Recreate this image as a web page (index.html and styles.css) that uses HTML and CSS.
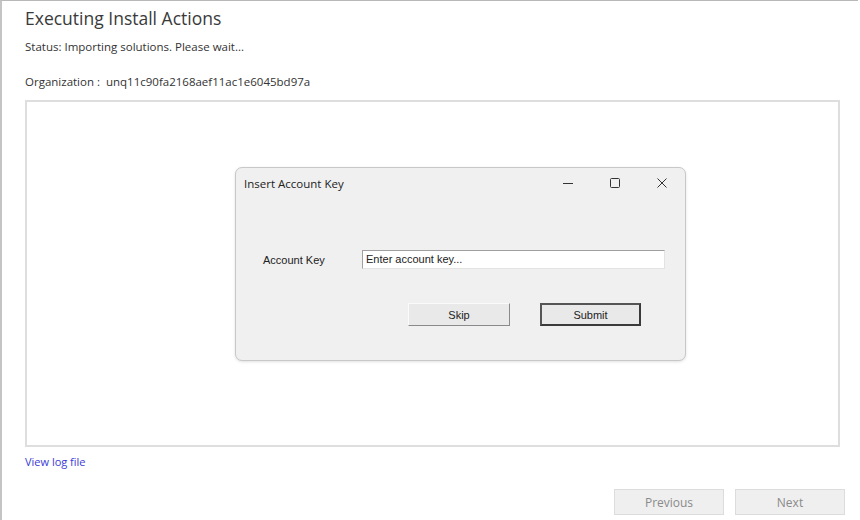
FILE: index.html
```html
<!DOCTYPE html>
<html>
	<head>
		<meta charset="utf-8">
		<title>Executing Install Actions</title>
		<link rel="stylesheet" href="styles.css">
	</head>
	<body>
		<div class="wizard">
			<h1 class="title">Executing Install Actions</h1>
			<p class="status">Status: Importing solutions. Please wait...</p>
			<p class="org">Organization :&nbsp; unq11c90fa2168aef11ac1e6045bd97a</p>

			<div class="panel">
				<div class="dialog">
					<div class="dlg-head">
						<span class="dlg-title">Insert Account Key</span>
						<span class="dlg-ctrl">
							<svg width="12" height="12" viewBox="0 0 12 12"><path d="M1 6.5h10" stroke="#333" stroke-width="1"/></svg>
						</span>
						<span class="dlg-ctrl">
							<svg width="12" height="12" viewBox="0 0 12 12"><rect x="1.5" y="1.5" width="9" height="9" rx="1" fill="none" stroke="#333" stroke-width="1"/></svg>
						</span>
						<span class="dlg-ctrl">
							<svg width="12" height="12" viewBox="0 0 12 12"><path d="M1.5 1.5l9 9M10.5 1.5l-9 9" stroke="#333" stroke-width="1"/></svg>
						</span>
					</div>
					<div class="dlg-body">
						<div class="row">
							<label class="lbl">Account Key</label>
							<div class="field">Enter account key...</div>
						</div>
						<div class="btns">
							<div class="wbtn">Skip</div>
							<div class="wbtn default">Submit</div>
						</div>
					</div>
				</div>
			</div>

			<a class="log" href="#">View log file</a>

			<div class="nav">
				<div class="navbtn">Previous</div>
				<div class="navbtn">Next</div>
			</div>
		</div>
	</body>
</html>
```

FILE: styles.css
```css
body{
    margin: 0;
    background: #fff;
    font-family: "Open Sans", "Noto Sans", sans-serif;
    color: #333;
}
.wizard{
    width: 858px;
    height: 520px;
    box-sizing: border-box;
    border-left: 2px solid #c4c4c4;
    border-top: 1px solid #b8b8b8;
    padding: 5px 0 0 23px;
}
.title{
    margin: 0;
    font-size: 17.5px;
    font-weight: 400;
    color: #3a3a3a;
    line-height: 24px;
}
.status{
    margin: 9px 0 0 0;
    font-size: 11.5px;
    line-height: 16px;
    color: #333;
}
.org{
    margin: 19px 0 0 0;
    font-size: 11.5px;
    line-height: 16px;
    color: #333;
}
.panel{
    margin-top: 10px;
    width: 815px;
    height: 347px;
    box-sizing: border-box;
    border: 2px solid #dedede;
    display: flex;
    padding: 65px 0 0 208px;
}
.dialog{
    width: 451px;
    height: 194px;
    box-sizing: border-box;
    border: 1px solid #c8c8c8;
    border-radius: 7px;
    background: #f0f0f0;
    box-shadow: 0 1px 3px rgba(0,0,0,0.12);
    display: flex;
    flex-direction: column;
}
.dlg-head{
    height: 30px;
    display: flex;
    align-items: center;
    padding: 0 0 0 8px;
    font-family: "Open Sans", "Noto Sans", sans-serif;
    font-size: 11.5px;
    color: #222;
}
.dlg-title{
    flex: 1;
}
.dlg-ctrl{
    width: 47px;
    display: flex;
    justify-content: center;
}
.dlg-body{
    font-family: "Liberation Sans", Arial, sans-serif;
    font-size: 11px;
    color: #222;
}
.row{
    display: flex;
    align-items: center;
    margin-top: 52px;
    padding-left: 27px;
}
.lbl{
    width: 99px;
}
.field{
    width: 303px;
    height: 19px;
    box-sizing: border-box;
    border: 1px solid #a0a0a0;
    border-right-color: #e3e3e3;
    border-bottom-color: #e3e3e3;
    background: #fff;
    padding: 2px 0 0 3px;
}
.btns{
    display: flex;
    margin-top: 34px;
    padding-left: 172px;
    gap: 30px;
}
.wbtn{
    width: 102px;
    height: 23px;
    box-sizing: border-box;
    border: 1px solid #adadad;
    border-top-color: #fafafa;
    border-left-color: #fafafa;
    border-right-color: #8a8a8a;
    border-bottom-color: #8a8a8a;
    background: #e9e9e9;
    display: flex;
    align-items: center;
    justify-content: center;
}
.wbtn.default{
    border: 2px solid #3a3a3a;
    border-top-color: #555;
    border-left-color: #555;
    width: 101px;
}
.log{
    display: block;
    margin-top: 8px;
    font-size: 11px;
    line-height: 14px;
    color: #3b3bd6;
    text-decoration: none;
}
.nav{
    display: flex;
    justify-content: flex-end;
    gap: 11px;
    margin-top: 20px;
    padding-right: 13px;
}
.navbtn{
    width: 110px;
    height: 26px;
    box-sizing: border-box;
    border: 1px solid #dcdcdc;
    background: #efefef;
    color: #8a8a8a;
    font-size: 12px;
    display: flex;
    align-items: center;
    justify-content: center;
}
```
